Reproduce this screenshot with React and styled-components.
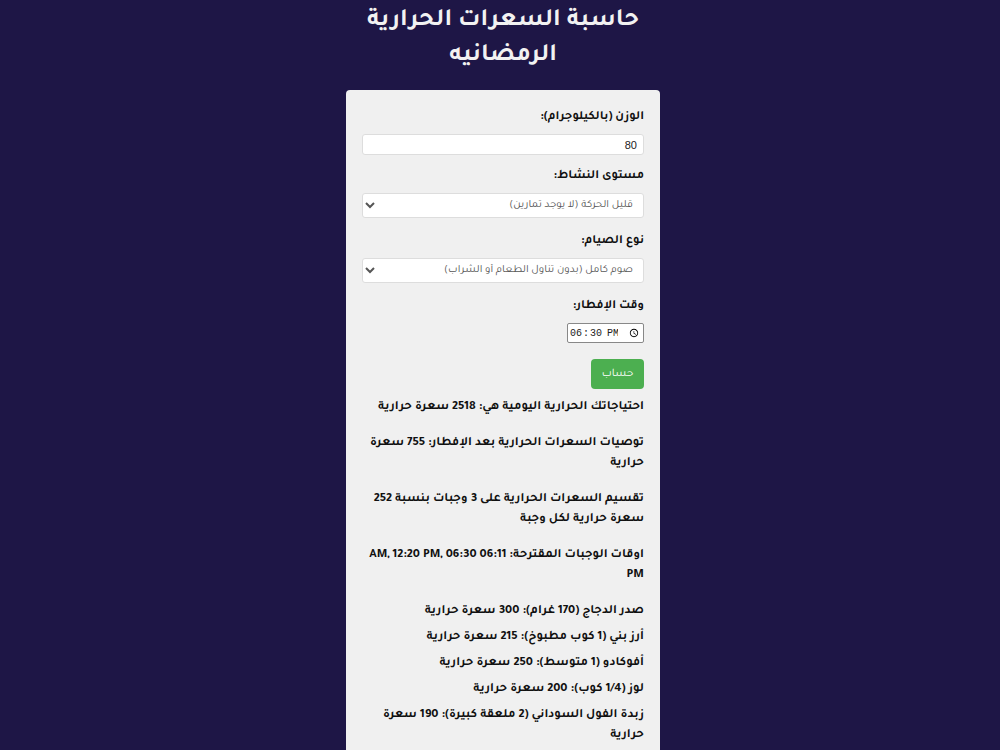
import React from "react";
import styled, { createGlobalStyle } from "styled-components";

const Global = createGlobalStyle`
  html, body {
    margin: 0;
    padding: 0;
    background: #1e1646;
  }
  body {
    direction: rtl;
    font-family: Tajawal, "Noto Sans Arabic", sans-serif;
  }
`;

const Page = styled.div`
  display: flex;
  flex-direction: column;
  align-items: center;
  min-height: 750px;
  padding-left: 6px;
`;

const Wrapper = styled.div`
  width: 314px;
  display: flex;
  flex-direction: column;
`;

const Title = styled.h1`
  margin: 4px 0 16px;
  color: #f2f2f2;
  font-size: 25px;
  line-height: 35px;
  font-weight: 700;
  text-align: center;
`;

const Card = styled.form`
  background: #f0f0f0;
  border-radius: 4px;
  padding: 17px 16px 16px;
  display: flex;
  flex-direction: column;
`;

const Label = styled.label`
  display: block;
  color: #111;
  font-size: 12.5px;
  font-weight: 700;
  line-height: 20px;
  margin-bottom: 7px;
`;

const TextInput = styled.input`
  box-sizing: border-box;
  width: 100%;
  height: 21px;
  border: 1px solid #ddd;
  border-radius: 3px;
  background: #fff;
  padding: 0 6px;
  font-family: "Liberation Sans", sans-serif;
  font-size: 11px;
  color: #222;
  margin-bottom: 11px;
  outline: none;
`;

const Select = styled.select`
  box-sizing: border-box;
  width: 100%;
  height: 25px;
  border: 1px solid #ddd;
  border-radius: 3px;
  background: #fff;
  padding: 0 6px;
  font-family: Tajawal, "Noto Sans Arabic", sans-serif;
  font-size: 11px;
  color: #555;
  margin-bottom: 13px;
`;

const TimeInput = styled.input`
  box-sizing: border-box;
  align-self: flex-start;
  width: 77px;
  height: 20px;
  border: 1px solid #888;
  border-radius: 2px;
  background: #fff;
  padding: 0 1px;
  font-family: "Liberation Mono", monospace;
  font-size: 10px;
  color: #222;
  direction: ltr;
  margin-bottom: 16px;
`;

const Button = styled.button`
  align-self: flex-start;
  width: 53px;
  height: 30px;
  border: none;
  border-radius: 4px;
  background: #4caf50;
  color: #fff;
  font-family: Tajawal, "Noto Sans Arabic", sans-serif;
  font-size: 11.5px;
  cursor: pointer;
  margin-bottom: 9px;
`;

const Result = styled.p`
  margin: 0 0 ${(p) => (p.$compact ? 6 : 16)}px;
  color: #111;
  font-size: 12.7px;
  font-weight: 700;
  line-height: 20px;
`;

const summary = [
  "احتياجاتك الحرارية اليومية هي: 2518 سعرة حرارية",
  "توصيات السعرات الحرارية بعد الإفطار: 755 سعرة حرارية",
  "تقسيم السعرات الحرارية على 3 وجبات بنسبة 252 سعرة حرارية لكل وجبة",
  "اوقات الوجبات المقترحة: 06:11 AM, 12:20 PM, 06:30 PM",
];

const foods = [
  "صدر الدجاج (170 غرام): 300 سعرة حرارية",
  "أرز بني (1 كوب مطبوخ): 215 سعرة حرارية",
  "أفوكادو (1 متوسط): 250 سعرة حرارية",
  "لوز (1/4 كوب): 200 سعرة حرارية",
  "زبدة الفول السوداني (2 ملعقة كبيرة): 190 سعرة حرارية",
];

export default function App() {
  return (
    <Page>
      <Global />
      <Wrapper>
        <Title>حاسبة السعرات الحرارية الرمضانيه</Title>
        <Card onSubmit={(e) => e.preventDefault()}>
          <Label htmlFor="weight">الوزن (بالكيلوجرام):</Label>
          <TextInput id="weight" type="number" defaultValue="80" />

          <Label htmlFor="activity">مستوى النشاط:</Label>
          <Select id="activity" defaultValue="low">
            <option value="low">قليل الحركة (لا يوجد تمارين)</option>
            <option value="mid">متوسط الحركة</option>
            <option value="high">كثير الحركة</option>
          </Select>

          <Label htmlFor="fast">نوع الصيام:</Label>
          <Select id="fast" defaultValue="full">
            <option value="full">صوم كامل (بدون تناول الطعام أو الشراب)</option>
            <option value="partial">صوم جزئي</option>
          </Select>

          <Label htmlFor="iftar">وقت الإفطار:</Label>
          <TimeInput id="iftar" type="time" defaultValue="18:30" />

          <Button type="submit">حساب</Button>

          {summary.map((t) => (
            <Result key={t}>{t}</Result>
          ))}
          {foods.map((t) => (
            <Result key={t} $compact>
              {t}
            </Result>
          ))}
        </Card>
      </Wrapper>
    </Page>
  );
}
